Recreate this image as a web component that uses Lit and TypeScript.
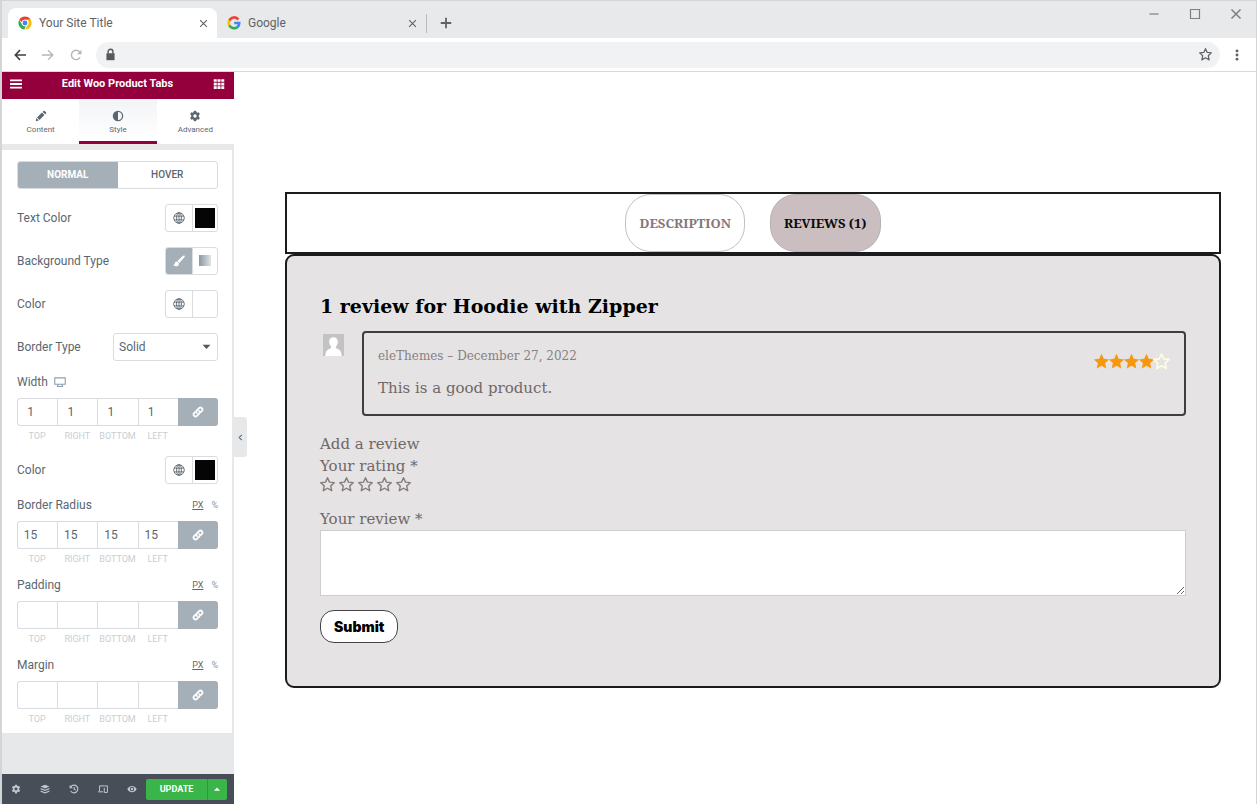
import { LitElement, html, svg, css } from "lit";
import { customElement, property, state } from "lit/decorators.js";
import { classMap } from "lit/directives/class-map.js";

const STAR = "M8 .8l2.1 4.7 5.1.5-3.8 3.5 1.1 5.1L8 12 3.5 14.600l1.100-5.100L.8 6l5.100-.5z";

const gear = svg`<path fill-rule="evenodd" d="M6.600 1h2.800l.4 1.800 1.500.9 1.800-.6 1.400 2.400-1.400 1.300v2.400l1.400 1.300-1.400 2.400-1.800-.6-1.500.9-.4 1.800H6.600l-.4-1.800-1.500-.9-1.800.6-1.400-2.400 1.400-1.300V6.800L1.500 5.500l1.400-2.400 1.800.6 1.500-.9zM8 5.700a2.300 2.300 0 1 0 0 4.600 2.300 2.300 0 0 0 0-4.600z"/>`;

const ICONS: Record<string, unknown> = {
  gear,
  menu: svg`<path d="M0 2h16v2.400H0zM0 6.800h16v2.400H0zM0 11.600h16v2.400H0z"/>`,
  grid: svg`<path d="M1 1.500h4v3.600H1zm5 0h4v3.600H6zm5 0h4v3.600h-4zM1 6.300h4v3.600H1zm5 0h4v3.600H6zm5 0h4v3.600h-4zM1 11.100h4v3.600H1zm5 0h4v3.600H6zm5 0h4v3.600h-4z"/>`,
  pencil: svg`<path d="M1 15l.9-4.200 3.300 3.300zM2.700 10l6.600-6.600 3.300 3.300L6 13.300zM10.200 2.500l1.200-1.200a1.200 1.200 0 0 1 1.700 0l1.600 1.600a1.200 1.200 0 0 1 0 1.700l-1.200 1.200z"/>`,
  contrast: svg`<path fill-rule="evenodd" d="M8 1a7 7 0 1 0 0 14A7 7 0 0 0 8 1zm0 1.700a5.300 5.300 0 0 1 0 10.600z"/>`,
  globe: svg`<g fill="none" stroke="currentColor" stroke-width="1.200"><circle cx="8" cy="8" r="7"/><ellipse cx="8" cy="8" rx="3.200" ry="7"/><path d="M1.600 5.500h12.800M1.600 10.500h12.800M8 1v14"/></g>`,
  brush: svg`<path d="M15.200.8c-.8-.5-1.600-.2-2.300.5L5.800 8l2.600 2.600L15 3.400c.8-.9 1-1.900.2-2.600zM5.200 8.600c-2 0-2.700 1.300-2.900 2.700-.1 1.200-.9 1.700-2 1.900 1.200 1.300 2.600 1.900 4.300 1.800 2.300-.2 3.700-1.900 3.300-4z"/>`,
  link: svg`<g fill="none" stroke="currentColor" stroke-width="2.300" stroke-linecap="round"><path d="M6.600 9.400a2.700 2.700 0 0 1 0-3.800l2.900-2.900a2.700 2.700 0 0 1 3.800 3.800l-1.700 1.700"/><path d="M9.400 6.600a2.700 2.700 0 0 1 0 3.800l-2.900 2.900a2.700 2.700 0 0 1-3.800-3.800l1.700-1.700"/></g>`,
  monitor: svg`<path fill="none" stroke="currentColor" stroke-width="1.500" d="M1 2.500h14v8.500H1zM4 14l2-3M12 14l-2-3M4 14h8"/>`,
  caret: svg`<path d="M1 5h14L8 12.500z"/>`,
  caretUp: svg`<path d="M2 11.500h12L8 5z"/>`,
  layers: svg`<path d="M8 1l7 3-7 3-7-3zM1 6.300l7 3 7-3v2l-7 3-7-3zM1 10.300l7 3 7-3v2l-7 3-7-3z"/>`,
  history: svg`<g fill="none" stroke="currentColor" stroke-width="1.800"><path d="M3 4.200a6.200 6.200 0 1 1-.4 7M8.300 4.600V8.300l2.500 1.500"/></g><path d="M1 1.500v5.300h5.300z"/>`,
  devices: svg`<path fill="none" stroke="currentColor" stroke-width="1.600" d="M2.500 11V3h8M0 12.500h8M10.500 3h4.500v10.500h-5V6"/>`,
  eye: svg`<path fill-rule="evenodd" d="M8 3C4.500 3 1.700 5.200.5 8c1.200 2.800 4 5 7.500 5s6.300-2.200 7.500-5C14.300 5.200 11.500 3 8 3zm0 1.500a3.500 3.500 0 1 1 0 7 3.500 3.500 0 0 1 0-7zm0 1.500a2 2 0 1 0 0 4 2 2 0 0 0 0-4z"/>`,
  chevron: svg`<path fill="none" stroke="currentColor" stroke-width="2.400" d="M11 2L5 8l6 6"/>`,
  close: svg`<path fill="none" stroke="currentColor" stroke-width="2" d="M2 2l12 12M14 2L2 14"/>`,
  plus: svg`<path fill="none" stroke="currentColor" stroke-width="2.400" d="M8 1v14M1 8h14"/>`,
  minimise: svg`<path fill="none" stroke="currentColor" stroke-width="1.600" d="M2 8h12"/>`,
  maximise: svg`<path fill="none" stroke="currentColor" stroke-width="1.600" d="M2 2h12v12H2z"/>`,
  back: svg`<path fill="none" stroke="currentColor" stroke-width="2" d="M16 8H2M8 1.500L1.700 8 8 14.500"/>`,
  forward: svg`<path fill="none" stroke="currentColor" stroke-width="1.800" d="M0 8h14M8 1.500L14.300 8 8 14.500"/>`,
  reload: svg`<path fill="none" stroke="currentColor" stroke-width="1.900" d="M13.500 11A6.200 6.200 0 1 1 12.600 3.700L14 5.300"/><path d="M15.300 1v6H9.300z"/>`,
  lock: svg`<path d="M3 6.500h10V15H3z"/><path fill="none" stroke="currentColor" stroke-width="1.700" d="M5 7V4.500a3 3 0 0 1 6 0V7"/>`,
  dots: svg`<circle cx="8" cy="2.500" r="1.900"/><circle cx="8" cy="8" r="1.900"/><circle cx="8" cy="13.500" r="1.900"/>`,
  star: svg`<path d=${STAR}/>`,
  starOutline: svg`<path fill="none" stroke="currentColor" stroke-width="1.500" stroke-linejoin="round" d=${STAR}/>`,
  chrome: svg`<circle cx="8" cy="8" r="7.500" fill="#fff"/><path fill="#ea4335" d="M8 .5a7.500 7.500 0 0 1 6.500 3.750H8a3.750 3.750 0 0 0-3.600 2.700L1.500 4.250A7.500 7.500 0 0 1 8 .5z"/><path fill="#fbbc05" d="M14.500 4.250A7.500 7.500 0 0 1 8 15.500l3.250-5.620A3.750 3.750 0 0 0 10.500 4.250z"/><path fill="#34a853" d="M1.500 4.250l3.250 5.620A3.750 3.750 0 0 0 9 11.600L7.200 15.450A7.500 7.500 0 0 1 1.500 4.250z"/><circle cx="8" cy="8" r="3.600" fill="#fff"/><circle cx="8" cy="8" r="2.800" fill="#4285f4"/>`,
  google: svg`<g fill="none" stroke-width="3"><path stroke="#ea4335" d="M13 4A6 6 0 0 0 2.700 5.300"/><path stroke="#fbbc05" d="M2.800 5.100a6 6 0 0 0 0 5.800"/><path stroke="#34a853" d="M2.700 10.700A6 6 0 0 0 12 12.500"/><path stroke="#4285f4" d="M8.200 8H14a6 6 0 0 1-2.200 4.700"/></g>`,
  avatar: svg`<path fill="#c3c3c3" d="M0 0h16v16H0z"/><path fill="#fff" d="M8 2.300c2 0 3.300 1.400 3.300 3.400 0 1.500-.7 2.800-1.600 3.500 0 1 .6 1.200 2 1.800 1.700.8 2.300 2 2.600 5H1.700c.3-3 .9-4.200 2.600-5 1.400-.6 2-.8 2-1.800-.9-.7-1.600-2-1.600-3.500 0-2 1.300-3.400 3.300-3.400z"/>`,
};

const icon = (name: string, cls = "") =>
  html`<svg class="icon ${cls}" viewBox="0 0 16 16" fill="currentColor" aria-hidden="true">${ICONS[name]}</svg>`;

const base = css`
  * { box-sizing: border-box; }
  button, input, select, textarea { font: inherit; color: inherit; margin: 0; border-radius: 0; }
  button { border: 0; padding: 0; background: none; display: flex; align-items: center; justify-content: center; cursor: pointer; }
  .icon { display: block; flex: none; width: 12px; height: 12px; }
`;

@customElement("browser-bar")
export class BrowserBar extends LitElement {
  static styles = [base, css`
    :host { display: block; flex: none; color: #5f6368; font: 12px/16px Roboto, sans-serif; }
    .strip { display: flex; height: 37px; padding: 7px 14px 0 6px; background: #e8e9eb; }
    .tab { display: flex; align-items: center; gap: 7px; width: 209px; padding: 0 9px 0 10px; border-radius: 8px 8px 0 0; }
    .tab.active { background: #fff; }
    .tab .title { flex: 1; text-align: left; justify-content: flex-start; }
    .tab .icon { width: 14px; height: 14px; }
    .tab .icon.x { width: 9px; height: 9px; }
    .new { align-self: center; height: 19px; padding-left: 13px; border-left: 1px solid #b9bbbe; }
    .window { display: flex; gap: 29px; margin-left: auto; align-self: flex-start; height: 12px; color: #7d7f83; }
    .tools { display: flex; align-items: center; gap: 16px; height: 34px; padding: 0 13px 0 12px; background: #fff; border-bottom: 1px solid #d9dadc; }
    .back { color: #3c4043; }
    .off { color: #b4b6b9; }
    .address { display: flex; flex: 1; align-items: center; gap: 8px; height: 26px; padding: 0 8px; border-radius: 13px; background: #f1f2f3; margin: 0 -5px 0 -2px; }
    .address input { flex: 1; min-width: 0; border: 0; background: none; outline: 0; padding: 0; }
    .address .icon { width: 13px; height: 13px; }
    .lock { color: #55585c; }
  `];

  render() {
    return html`
      <div class="strip">
        <div class="tab active">${icon("chrome")}<button class="title">Your Site Title</button>
          <button aria-label="Close tab">${icon("close", "x")}</button></div>
        <div class="tab">${icon("google")}<button class="title">Google</button>
          <button aria-label="Close tab">${icon("close", "x")}</button></div>
        <button class="new" aria-label="New tab">${icon("plus")}</button>
        <div class="window">
          <button aria-label="Minimise">${icon("minimise")}</button>
          <button aria-label="Maximise">${icon("maximise")}</button>
          <button aria-label="Close window">${icon("close")}</button>
        </div>
      </div>
      <div class="tools">
        <button class="back" aria-label="Back">${icon("back")}</button>
        <button class="off" aria-label="Forward">${icon("forward")}</button>
        <button class="off" aria-label="Reload">${icon("reload")}</button>
        <div class="address">
          <span class="lock">${icon("lock")}</span>
          <input type="text" aria-label="Address" />
          <button aria-label="Bookmark">${icon("starOutline")}</button>
        </div>
        <button aria-label="Browser menu">${icon("dots")}</button>
      </div>`;
  }
}

@customElement("dimension-field")
export class DimensionField extends LitElement {
  @property() label = "";
  @property() value = "";
  @property({ type: Boolean }) units = false;

  static styles = [base, css`
    :host { display: block; }
    .head { display: flex; align-items: center; gap: 6px; height: 16px; margin-bottom: 8px; }
    .head .icon { color: #8f9fae; }
    .units { display: flex; gap: 8px; margin-left: auto; font-size: 9px; color: #8d979f; }
    .units .on { text-decoration: underline; color: #5b6770; }
    .cells { display: grid; grid-template-columns: repeat(5, 1fr); }
    .cell { display: flex; flex-direction: column-reverse; gap: 4px; }
    .cell label { height: 12px; font-size: 9px; line-height: 12px; color: #c9ced3; text-align: center; }
    .cell input { width: 100%; height: 28px; padding: 0 14px 0 0; border: 1px solid #d9dde1; border-right: 0; background: #fff; text-align: center; }
    .cell:first-child input { border-radius: 3px 0 0 3px; }
    .linked { height: 28px; border-radius: 0 3px 3px 0; background: #a4afb8; color: #fff; }
  `];

  render() {
    return html`
      <div class="head"><span>${this.label}</span>
        ${this.units
          ? html`<span class="units"><button class="on">PX</button><button>%</button></span>`
          : icon("monitor")}
      </div>
      <div class="cells">
        ${["TOP", "RIGHT", "BOTTOM", "LEFT"].map((side) => html`
          <div class="cell"><label for=${side}>${side}</label><input id=${side} type="text" .value=${this.value} /></div>`)}
        <button class="linked" aria-label="Link values">${icon("link")}</button>
      </div>`;
  }
}

@customElement("style-panel")
export class StylePanel extends LitElement {
  @state() private mode = "NORMAL";

  static styles = [base, css`
    :host { display: flex; flex-direction: column; flex: none; width: 232px; position: relative; color: #5b6770; background: #e6e8ea; font: 12px/16px Roboto, sans-serif; }
    .bar { display: flex; align-items: center; justify-content: space-between; height: 27px; flex: none; padding: 0 9px 4px 8px; background: #93003c; color: #fff; font-weight: 700; font-size: 11px; }
    .tabs { display: grid; grid-template-columns: repeat(3, 1fr); flex: none; height: 45px; background: #fff; }
    .tabs button { flex-direction: column; gap: 2px; padding-top: 5px; border-bottom: 3px solid transparent; font-size: 8px; line-height: 12px; color: #5b6770; }
    .tabs .active { background: linear-gradient(#f3f4f6, #fff); border-color: #93003c; }
    .body { display: flex; flex-direction: column; gap: 12px; margin-top: 6px; padding: 10px 14px 8px 15px; border-right: 2px solid #e6e8ea; background: #fff; }
    .modes { display: grid; grid-template-columns: 1fr 1fr; height: 28px; margin: 1px 0; border: 1px solid #d9dde1; border-radius: 3px; overflow: hidden; font-size: 10px; font-weight: 500; }
    .modes .on { background: #a4afb8; color: #fff; font-weight: 700; }
    .row { display: flex; align-items: center; justify-content: space-between; height: 31px; }
    .pair { display: grid; grid-template-columns: 1fr 1fr; width: 53px; height: 28px; border: 1px solid #d9dde1; border-radius: 3px; overflow: hidden; }
    .pair > * + * { border-left: 1px solid #d9dde1; }
    .pair .on { background: #a4afb8; color: #fff; }
    .swatch { padding: 3px 2px; }
    .chip { flex: 1; align-self: stretch; }
    .chip.black { background: #050505; }
    .fade { width: 12px; height: 11px; background: linear-gradient(90deg, #8d979f, #dfe4e6); }
    .choice { display: grid; grid-template-columns: 1fr 16px; align-items: center; width: 105px; height: 28px; }
    .choice select { grid-area: 1 / 1 / 2 / 3; height: 100%; padding: 0 5px; border: 1px solid #d9dde1; border-radius: 3px; background: #fff; appearance: none; }
    .choice .icon { grid-area: 1 / 2; width: 9px; height: 9px; pointer-events: none; color: #4d5965; }
    .foot { display: flex; align-items: center; flex: none; height: 30px; margin-top: auto; padding-right: 7px; background: #474e57; color: #c3c7cb; }
    .foot .tool { flex: 1; height: 100%; }
    .foot .icon { width: 10px; height: 10px; }
    .update { width: 61px; height: 21px; border-radius: 2px 0 0 2px; background: #39b54a; color: #fff; font-size: 9px; font-weight: 700; }
    .more { width: 20px; height: 21px; border-left: 1px solid #2c9a3c; border-radius: 0 2px 2px 0; background: #39b54a; color: #fff; }
    .foot .more .icon { width: 8px; height: 8px; }
    .collapse { position: absolute; left: 100%; top: 345px; width: 13px; height: 40px; border-radius: 0 3px 3px 0; background: #e6e8ea; }
    .collapse .icon { width: 7px; height: 7px; }
  `];

  private colour(label: string, black: boolean) {
    return html`<div class="row"><span>${label}</span><div class="pair">
      <button aria-label="${label} from globals">${icon("globe")}</button>
      <button class="swatch" aria-label=${label}><span class=${classMap({ chip: true, black })}></span></button>
    </div></div>`;
  }

  render() {
    return html`
      <header class="bar">
        <button aria-label="Menu">${icon("menu")}</button><span>Edit Woo Product Tabs</span>
        <button aria-label="Widgets">${icon("grid")}</button>
      </header>
      <nav class="tabs">
        <button>${icon("pencil")}Content</button>
        <button class="active">${icon("contrast")}Style</button>
        <button>${icon("gear")}Advanced</button>
      </nav>
      <section class="body">
        <div class="modes">
          ${["NORMAL", "HOVER"].map((m) => html`
            <button class=${classMap({ on: this.mode === m })} @click=${() => (this.mode = m)}>${m}</button>`)}
        </div>
        ${this.colour("Text Color", true)}
        <div class="row"><span>Background Type</span><div class="pair">
          <button class="on" aria-label="Classic">${icon("brush")}</button>
          <button aria-label="Gradient"><span class="fade"></span></button>
        </div></div>
        ${this.colour("Color", false)}
        <div class="row"><label for="border">Border Type</label>
          <div class="choice"><select id="border"><option>Solid</option></select>${icon("caret")}</div>
        </div>
        <dimension-field label="Width" value="1"></dimension-field>
        ${this.colour("Color", true)}
        <dimension-field label="Border Radius" value="15" units></dimension-field>
        <dimension-field label="Padding" units></dimension-field>
        <dimension-field label="Margin" units></dimension-field>
      </section>
      <footer class="foot">
        ${[["gear", "Settings"], ["layers", "Navigator"], ["history", "History"], ["devices", "Responsive mode"], ["eye", "Preview"]].map(
          ([name, label]) => html`<button class="tool" aria-label=${label}>${icon(name)}</button>`)}
        <button class="update">UPDATE</button>
        <button class="more" aria-label="Save options">${icon("caretUp")}</button>
      </footer>
      <button class="collapse" aria-label="Collapse panel">${icon("chevron")}</button>`;
  }
}

@customElement("product-tabs")
export class ProductTabs extends LitElement {
  @state() private rating = 0;

  static styles = [base, css`
    :host { display: block; flex: 1; min-width: 0; padding: 120px 35px 0 51px; background: #fff; color: #716766; font: 15px/22px "DejaVu Serif", serif; }
    .tabs { display: flex; justify-content: center; gap: 25px; height: 62px; border: 2px solid #1b1b1d; }
    .tabs button { padding: 0 13px; border: 1px solid #c5bfc0; border-radius: 26px; color: #85787a; font: bold 13px/20px "Noto Serif", "DejaVu Serif Condensed", "DejaVu Serif", serif; }
    .tabs .active { background: #cabec0; border-color: #b9b0b2; color: #0c0a0b; }
    .panel { padding: 35px 33px 43px; border: 2px solid #1b1b1d; border-radius: 9px; background: #e5e3e4; }
    h2 { margin: 0 0 10px; color: #000; font: 900 19px/30px "DejaVu Serif", serif; }
    .review { display: flex; align-items: flex-start; gap: 18px; margin-bottom: 17px; }
    .review > .icon { width: 21px; height: 22px; margin: 3px 0 0 3px; }
    .card { flex: 1; display: flex; justify-content: space-between; height: 85px; padding: 12px 15px 12px 14px; border: 2px solid #3f3f42; border-radius: 4px; }
    .meta { margin: 0 0 10px; color: #888081; font-size: 12px; }
    .said { margin: 0; }
    .score { display: flex; height: 17px; margin-top: 8px; color: #f6970c; }
    .score .icon { width: 17px; height: 17px; margin: 0 -1px; }
    .score .empty { color: #fffde0; }
    h3, .rate { margin: 0; padding: 0; border: 0; font-weight: 400; font-size: 15px; }
    legend { padding: 0; }
    .stars { display: flex; gap: 4px; height: 21px; margin-bottom: 10px; }
    .stars label { display: flex; cursor: pointer; color: #857d7c; }
    .stars input { appearance: none; width: 0; height: 0; }
    .stars .icon { width: 15px; height: 15px; }
    .field { display: block; }
    textarea { display: block; width: 100%; height: 66px; border: 1px solid #cfcdce; background: #fff; margin-bottom: 14px; resize: vertical; }
    .submit { height: 33px; padding: 0 13px; border: 1px solid #454547; border-radius: 14px; background: #fff; color: #000; font: 900 14px/20px Inter, sans-serif; }
  `];

  render() {
    return html`
      <div class="tabs"><button>DESCRIPTION</button><button class="active">REVIEWS (1)</button></div>
      <section class="panel">
        <h2>1 review for Hoodie with Zipper</h2>
        <article class="review">
          <svg class="icon" viewBox="0 0 16 16" preserveAspectRatio="none" role="img" aria-label="Avatar">${ICONS.avatar}</svg>
          <div class="card">
            <div><p class="meta">eleThemes – December 27, 2022</p><p class="said">This is a good product.</p></div>
            <div class="score" role="img" aria-label="4 out of 5">
              ${[1, 2, 3, 4, 5].map((n) => icon(n < 5 ? "star" : "starOutline", n < 5 ? "" : "empty"))}
            </div>
          </div>
        </article>
        <form @submit=${(e: Event) => e.preventDefault()}>
          <h3>Add a review</h3>
          <fieldset class="rate"><legend>Your rating *</legend>
            <div class="stars">
              ${[1, 2, 3, 4, 5].map((n) => html`<label aria-label="${n} stars">
                <input type="radio" name="rating" @change=${() => (this.rating = n)} />${icon(n <= this.rating ? "star" : "starOutline")}</label>`)}
            </div>
          </fieldset>
          <label class="field" for="review">Your review *</label>
          <textarea id="review"></textarea>
          <button class="submit">Submit</button>
        </form>
      </section>`;
  }
}

@customElement("app-root")
export class AppRoot extends LitElement {
  static styles = css`
    :host { display: flex; flex-direction: column; box-sizing: border-box; min-height: 100vh; border: 1px solid #d4d5d7; border-width: 1px 1px 0 2px; background: #fff; }
    main { display: flex; flex: 1; }
  `;

  render() {
    return html`<browser-bar></browser-bar><main><style-panel></style-panel><product-tabs></product-tabs></main>`;
  }
}
